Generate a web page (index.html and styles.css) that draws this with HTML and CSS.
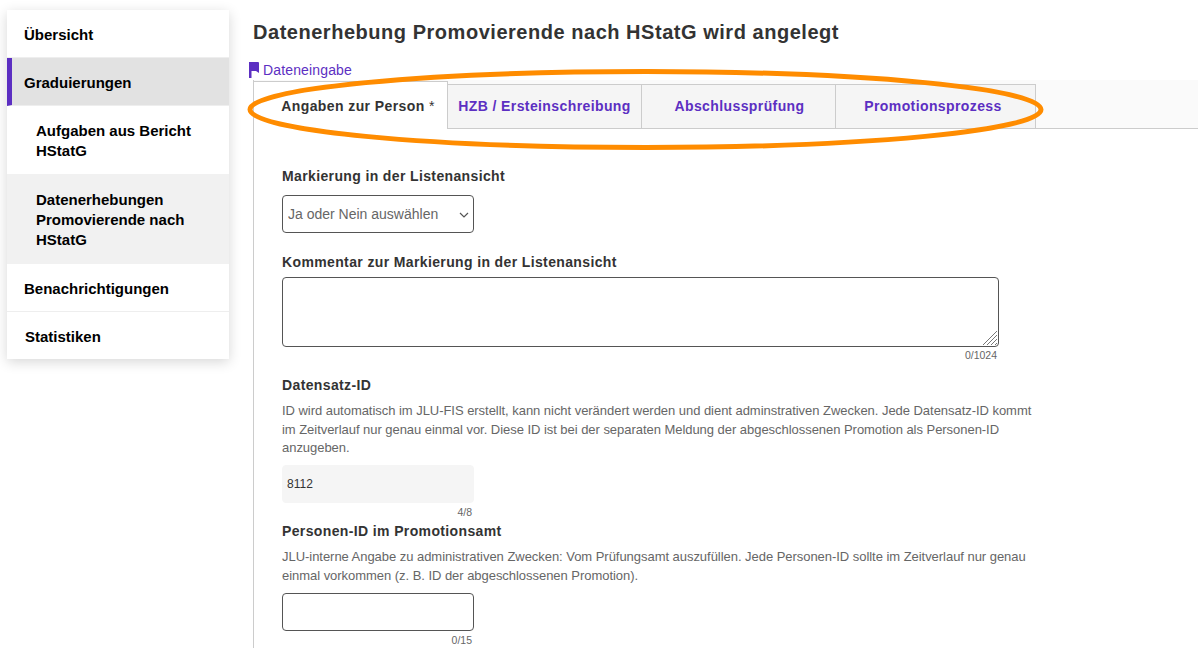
FILE: index.html
```html
<!DOCTYPE html>
<html>
<head>
  <meta charset="UTF-8">
  <title>Datenerhebung Promovierende nach HStatG</title>
  <link rel="stylesheet" href="styles.css">
</head>
<body>
  <nav class="sidebar">
    <a class="nav-item">Übersicht</a>
    <a class="nav-item active">Graduierungen</a>
    <a class="nav-item sub">Aufgaben aus Bericht HStatG</a>
    <a class="nav-item sub current">Datenerhebungen Promovierende nach HStatG</a>
    <a class="nav-item">Benachrichtigungen</a>
    <a class="nav-item last">Statistiken</a>
  </nav>

  <main class="main">
    <h1>Datenerhebung Promovierende nach HStatG wird angelegt</h1>
    <div class="crumb">
      <svg class="flag" width="10" height="16" viewBox="0 0 10 16"><path d="M0 0H9Q10 0 10 1V11L7 9H2.500V16H0Z" fill="#5c2fc2"/></svg>
      <span>Dateneingabe</span>
    </div>

    <div class="panel">
      <div class="tabs">
        <div class="tab selected">Angaben zur Person <span class="required">*</span></div>
        <div class="tab t2">HZB / Ersteinschreibung</div>
        <div class="tab t3">Abschlussprüfung</div>
        <div class="tab t4">Promotionsprozess</div>
      </div>

      <div class="form">
        <div class="field first">
          <label>Markierung in der Listenansicht</label>
          <select class="short">
            <option>Ja oder Nein auswählen</option>
          </select>
        </div>

        <div class="field comment">
          <label>Kommentar zur Markierung in der Listenansicht</label>
          <div class="area">
            <textarea></textarea>
            <svg class="grip" width="16" height="16" viewBox="0 0 16 16">
              <path d="M1 15L15 1M5 15L15 5M9 15L15 9M13 15L15 13" stroke="#777" stroke-width="1" fill="none"/>
            </svg>
          </div>
          <div class="counter wide">0/1024</div>
        </div>

        <div class="field dataset">
          <label>Datensatz-ID</label>
          <p class="hint">ID wird automatisch im JLU-FIS erstellt, kann nicht verändert werden und dient adminstrativen Zwecken. Jede Datensatz-ID kommt im Zeitverlauf nur genau einmal vor. Diese ID ist bei der separaten Meldung der abgeschlossenen Promotion als Personen-ID anzugeben.</p>
          <input class="short readonly" type="text" value="8112" readonly>
          <div class="counter narrow">4/8</div>
        </div>

        <div class="field person">
          <label>Personen-ID im Promotionsamt</label>
          <p class="hint">JLU-interne Angabe zu administrativen Zwecken: Vom Prüfungsamt auszufüllen. Jede Personen-ID sollte im Zeitverlauf nur genau einmal vorkommen (z. B. ID der abgeschlossenen Promotion).</p>
          <input class="short" type="text">
          <div class="counter narrow">0/15</div>
        </div>
      </div>
    </div>
  </main>

  <svg class="marker" width="1198" height="160" viewBox="0 0 1198 160">
    <ellipse cx="645.500" cy="109.500" rx="395.500" ry="38" fill="none" stroke="#ff8c00" stroke-width="5"/>
  </svg>
</body>
</html>
```

FILE: styles.css
```css
html, body {
  height: 648px;
  overflow: hidden;
}
body {
  margin: 0;
  display: flex;
  align-items: flex-start;
  font-family: "Liberation Sans", Arial, sans-serif;
  color: #333;
  background-color: white;
}
.sidebar {
  width: 222px;
  flex: none;
  margin: 10px 24px 0 7px;
  background-color: white;
  box-shadow: 0 3px 12px rgba(0, 0, 0, 0.16);
}
.nav-item {
  display: block;
  padding: 16px 17px 13px;
  font-size: 15px;
  line-height: 18px;
  font-weight: bold;
  color: #000;
  border-bottom: 1px solid #eee;
}
.nav-item.active {
  background-color: #e2e2e2;
  border-left: 5px solid #5c2fc2;
  padding-left: 12px;
}
.nav-item.sub {
  padding: 15px 29px 13px;
  line-height: 20px;
  border-bottom: none;
}
.nav-item.current {
  background-color: #f1f1f1;
  padding: 16px 29px 14px;
}
.nav-item.last {
  border-bottom: none;
  padding-left: 18px;
}
.main {
  flex: 1;
  min-width: 0;
}
h1 {
  margin: 20px 0 0;
  font-size: 20px;
  line-height: 24px;
  letter-spacing: 0.53px;
  color: #333;
}
.crumb {
  display: flex;
  align-items: center;
  gap: 4px;
  margin: 17px 0 0 -4px;
  height: 18px;
  font-size: 14px;
  letter-spacing: 0.15px;
  color: #5c2fc2;
}
.panel {
  border-left: 1px solid #ccc;
  margin-top: 1px;
  height: 600px;
}
.tabs {
  display: flex;
  align-items: flex-end;
  height: 49px;
  background-color: #fafafa;
  border-bottom: 1px solid #ccc;
  box-sizing: border-box;
}
.tab {
  height: 45px;
  box-sizing: border-box;
  margin-bottom: -1px;
  padding-top: 12px;
  text-align: center;
  font-size: 14px;
  line-height: 18px;
  font-weight: bold;
  letter-spacing: 0.4px;
  color: #5c2fc2;
  background-color: #f5f5f5;
  border-top: 1px solid #ccc;
  border-bottom: 1px solid #ccc;
  border-right: 1px solid #ccc;
}
.tab.selected {
  width: 194px;
  height: 48px;
  padding: 15px 0 0 15px;
  color: #333;
  background-color: white;
  border-bottom: none;
}
.required {
  font-weight: normal;
}
.t2 { width: 194px; }
.t3 { width: 194px; padding-left: 2px; }
.t4 { width: 200px; padding-right: 5px; }
.form {
  padding-left: 28px;
}
.field label {
  display: block;
  font-size: 14px;
  line-height: 18px;
  font-weight: bold;
  letter-spacing: 0.37px;
  color: #333;
}
.field.first { padding-top: 38px; }
.field.comment { padding-top: 20px; }
.field.dataset { padding-top: 14px; }
.field.person { padding-top: 3px; }
select, input, textarea {
  display: block;
  box-sizing: border-box;
  font-family: "Liberation Sans", Arial, sans-serif;
  font-size: 12px;
  color: #333;
  border: 1px solid #555;
  border-radius: 4px;
  background-color: white;
}
.short {
  width: 192px;
  height: 38px;
}
select.short {
  appearance: none;
  margin-top: 10px;
  padding-left: 5px;
  font-size: 14px;
  color: #666;
  background-image: url("data:image/svg+xml,%3Csvg xmlns='http://www.w3.org/2000/svg' width='10' height='6'%3E%3Cpath d='M1 1l4 4 4-4' fill='none' stroke='%23555' stroke-width='1.200'/%3E%3C/svg%3E");
  background-repeat: no-repeat;
  background-position: 176px 16px;
}
.area {
  position: relative;
  width: 717px;
  margin-top: 6px;
}
textarea {
  width: 717px;
  height: 70px;
  resize: none;
}
.grip {
  position: absolute;
  right: 1px;
  bottom: 1px;
}
.readonly {
  background-color: #f5f5f5;
  border-color: #f5f5f5;
  padding-left: 4px;
}
.hint {
  width: 760px;
  margin: 8px 0 7.500px;
  font-size: 13px;
  line-height: 18.500px;
  letter-spacing: -0.04px;
  color: #666;
}
.counter {
  margin-top: 1px;
  font-size: 10.500px;
  line-height: 14px;
  color: #666;
  text-align: right;
}
.counter.wide { width: 715px; }
.counter.narrow { width: 190px; margin-top: 2px; }
.marker {
  position: absolute;
  top: 0;
  left: 0;
  pointer-events: none;
}
```
